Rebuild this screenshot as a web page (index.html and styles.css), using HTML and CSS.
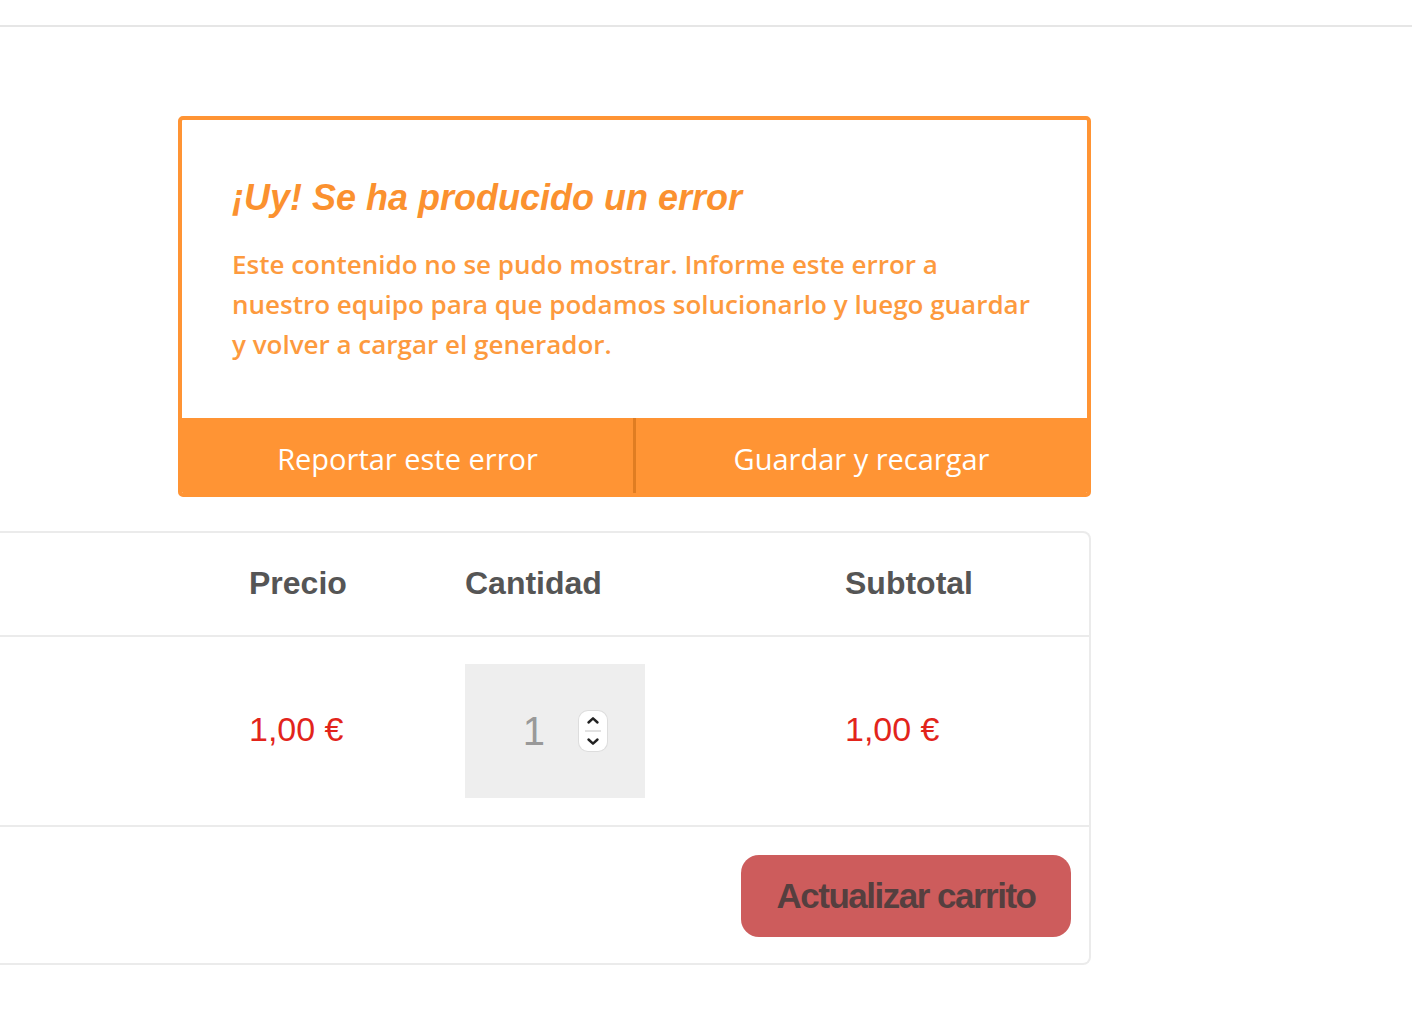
FILE: index.html
```html
<!DOCTYPE html>
<html lang="es">
<head>
  <meta charset="UTF-8">
  <title>Carrito</title>
  <link rel="stylesheet" href="styles.css">
</head>
<body>

  <header class="topbar"></header>

  <main class="page">

    <section class="error-box">
      <div class="error-body">
        <h2 class="error-title">¡Uy! Se ha producido un error</h2>
        <p class="error-text">Este contenido no se pudo mostrar. Informe este error a nuestro equipo para que podamos solucionarlo y luego guardar y volver a cargar el generador.</p>
      </div>
      <div class="error-actions">
        <button class="error-btn">Reportar este error</button>
        <button class="error-btn">Guardar y recargar</button>
      </div>
    </section>

    <form class="cart">
      <div class="cart-row cart-head">
        <div></div>
        <div>Precio</div>
        <div>Cantidad</div>
        <div>Subtotal</div>
      </div>

      <div class="cart-row cart-item">
        <div></div>
        <div class="price">1,00 €</div>
        <div>
          <div class="qty">
            <span class="qty-value">1</span>
            <span class="spinner">
              <svg width="16" height="12" viewBox="0 0 16 12"><path d="M3.5 8 L8 3.8 L12.5 8" fill="none" stroke="#222" stroke-width="2.4" stroke-linecap="round" stroke-linejoin="round"/></svg>
              <svg width="16" height="12" viewBox="0 0 16 12"><path d="M3.5 4 L8 8.2 L12.5 4" fill="none" stroke="#222" stroke-width="2.4" stroke-linecap="round" stroke-linejoin="round"/></svg>
            </span>
          </div>
        </div>
        <div class="price">1,00 €</div>
      </div>

      <div class="cart-actions">
        <button type="button" class="update-btn">Actualizar carrito</button>
      </div>
    </form>

  </main>

</body>
</html>
```

FILE: styles.css
```css
body {
  margin: 0;
  background-color: #fff;
  font-family: 'Liberation Sans', Arial, sans-serif;
  color: #555;
}

.topbar {
  height: 25px;
  border-bottom: 2px solid #e6e6e6;
}

.page {
  padding-top: 89px;
}

/* error box */

.error-box {
  margin-left: 178px;
  width: 913px;
  box-sizing: border-box;
  border: 4px solid #ff9434;
  border-radius: 5px;
  background-color: #fff;
  overflow: hidden;
}

.error-body {
  padding: 57px 52px 54px 50px;
}

.error-title {
  margin: 0 0 25px;
  font-size: 36px;
  font-style: italic;
  font-weight: bold;
  color: #fb912f;
}

.error-text {
  margin: 0;
  font-family: 'Open Sans', sans-serif;
  font-size: 26px;
  font-weight: 600;
  line-height: 40px;
  color: #fd9a3e;
}

.error-actions {
  display: flex;
  height: 75px;
  background-color: #ff9434;
}

.error-btn {
  flex: 1;
  border: 0;
  background: none;
  font-family: 'Open Sans', sans-serif;
  font-size: 29px;
  color: #fff;
  padding: 5px 0 0;
}

.error-btn + .error-btn {
  border-left: 3px solid #e07d22;
}

/* cart table */

.cart {
  margin-top: 34px;
  width: 1091px;
  box-sizing: border-box;
  border: 2px solid #ebebeb;
  border-left: 0;
  border-radius: 0 8px 8px 0;
}

.cart-row {
  display: grid;
  grid-template-columns: 249px 216px 380px 1fr;
  border-bottom: 2px solid #ebebeb;
}

.cart-head {
  padding: 32px 0 33px;
  font-size: 32px;
  font-weight: bold;
  color: #555;
}

.cart-item {
  height: 188px;
  align-items: center;
}

.price {
  font-size: 34px;
  color: #e2241b;
  margin-top: -3px;
}

.qty {
  display: flex;
  align-items: center;
  justify-content: flex-end;
  gap: 34px;
  width: 180px;
  height: 134px;
  box-sizing: border-box;
  padding-right: 38px;
  background-color: #eee;
}

.qty-value {
  font-size: 40px;
  color: #999;
}

.spinner {
  display: flex;
  flex-direction: column;
  align-items: center;
  width: 28px;
  height: 40px;
  box-sizing: border-box;
  border-radius: 9px;
  background-color: #fff;
  box-shadow: 0 0 0 1px #ddd;
}

.spinner svg {
  flex: 1;
}

.spinner svg:first-child {
  border-bottom: 2px solid #e2e2e2;
}

.cart-actions {
  display: flex;
  justify-content: flex-end;
  padding: 28px 18px 26px;
}

.update-btn {
  width: 330px;
  height: 82px;
  border: 0;
  border-radius: 18px;
  background-color: #cd5c5c;
  font-family: 'Liberation Sans', Arial, sans-serif;
  font-size: 35px;
  font-weight: bold;
  letter-spacing: -1.5px;
  color: #553f3f;
}
```
